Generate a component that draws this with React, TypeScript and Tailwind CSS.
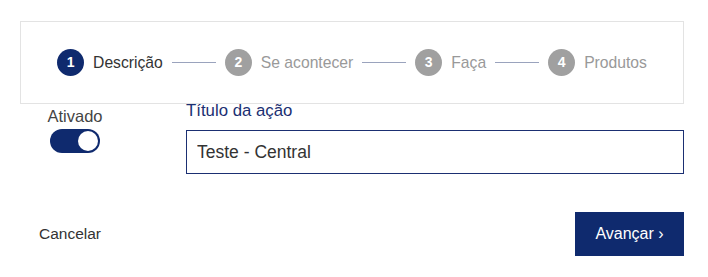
import React, { useState } from "react";

const steps = [
  { n: 1, label: "Descrição", active: true },
  { n: 2, label: "Se acontecer", active: false },
  { n: 3, label: "Faça", active: false },
  { n: 4, label: "Produtos", active: false },
];

export default function App() {
  const [enabled, setEnabled] = useState(true);
  const [title, setTitle] = useState("Teste - Central");

  return (
    <div
      className="w-[708px] h-[277px] bg-white pl-[20px] pr-[24px] pt-[21px]"
      style={{ fontFamily: "'Liberation Sans', Arial, sans-serif" }}
    >
      {/* Stepper */}
      <div className="h-[83px] border border-[#e3e3e3] flex items-center justify-center">
        {steps.map((s, i) => (
          <React.Fragment key={s.n}>
            {i > 0 && <div className="w-[44px] h-px bg-[#9aa3bd] mx-[9px]" />}
            <div className="flex items-center">
              <div
                className={`w-[27px] h-[27px] rounded-full flex items-center justify-center text-white text-[14px] font-semibold ${
                  s.active ? "bg-[#0f2a6e]" : "bg-[#a0a0a0]"
                }`}
              >
                {s.n}
              </div>
              <span className={`ml-[9px] text-[15.7px] ${s.active ? "text-[#333]" : "text-[#999]"}`}>
                {s.label}
              </span>
            </div>
          </React.Fragment>
        ))}
      </div>

      {/* Form row */}
      <div className="flex">
        <div className="w-[110px] flex flex-col items-center pt-[4px]">
          <span className="text-[16.5px] leading-[16px] text-[#444]">Ativado</span>
          <button
            onClick={() => setEnabled(!enabled)}
            className={`mt-[5px] w-[50px] h-[24px] rounded-full flex items-center px-[2px] ${
              enabled ? "bg-[#0f2a6e] justify-end" : "bg-gray-300 justify-start"
            }`}
          >
            <span className="w-[20px] h-[20px] rounded-full bg-white" />
          </button>
        </div>
        <div className="ml-[56px] flex-1">
          <label className="block text-[16.8px] leading-[16px] text-[#1b2f72] -mt-[1px]">Título da ação</label>
          <input
            value={title}
            onChange={(e) => setTitle(e.target.value)}
            className="mt-[11px] w-full h-[44px] border border-[#1b2f72] px-[10px] text-[17.5px] text-[#333] outline-none"
          />
        </div>
      </div>

      {/* Actions */}
      <div className="mt-[38px] flex items-center justify-between">
        <button className="ml-[19px] text-[15.5px] text-[#333]">Cancelar</button>
        <button className="w-[109px] h-[44px] bg-[#0f2a6e] text-white text-[16px]">Avançar ›</button>
      </div>
    </div>
  );
}
